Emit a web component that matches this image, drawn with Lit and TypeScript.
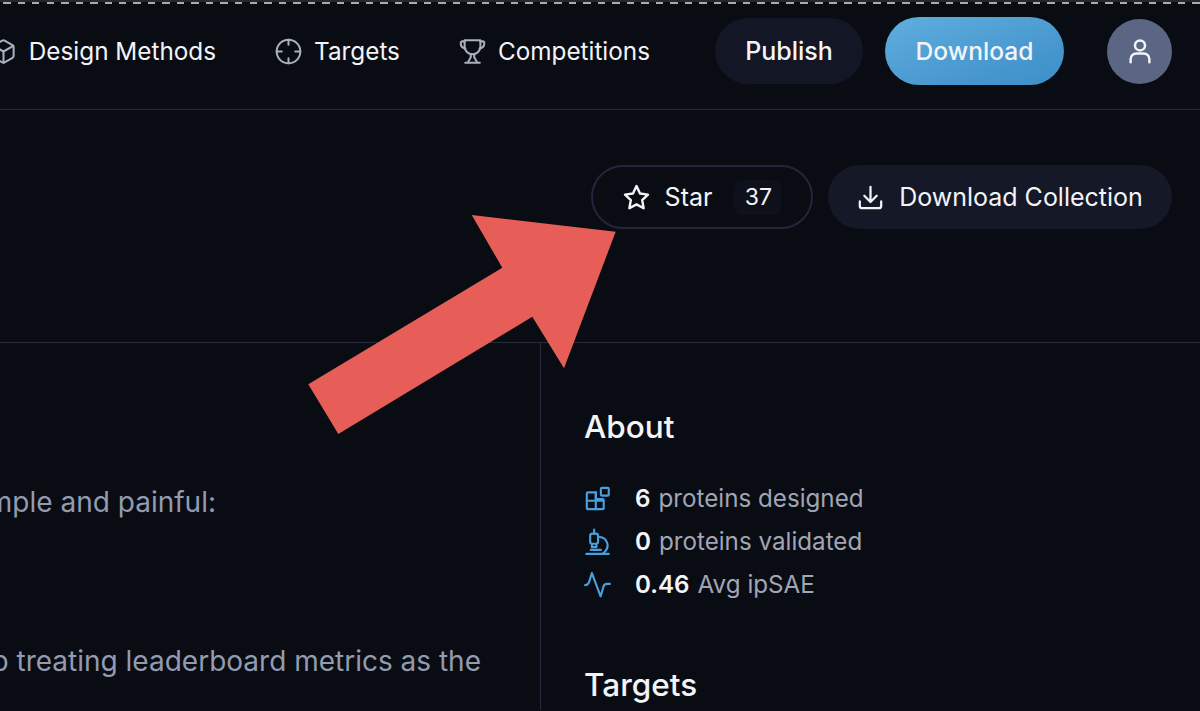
import { LitElement, html, css, svg } from 'lit';
import { customElement } from 'lit/decorators.js';

// stroke icons share one wrapper, size comes from the css
const icon = (body: unknown) => html`
  <svg viewBox="0 0 24 24" fill="none" stroke="currentColor" stroke-width="2"
    stroke-linecap="round" stroke-linejoin="round">${body}</svg>`;

const cube = svg`<path d="M21 8a2 2 0 0 0-1-1.700l-7-4a2 2 0 0 0-2 0l-7 4A2 2 0 0 0 3 8v8a2 2 0 0 0 1 1.700l7 4a2 2 0 0 0 2 0l7-4a2 2 0 0 0 1-1.700Z"/><path d="m3.300 7 8.700 5 8.700-5"/><path d="M12 22V12"/>`;
const crosshair = svg`<circle cx="12" cy="12" r="10.500"/><path d="M12 1.500V6M12 18v4.500M1.500 12H6M18 12h4.500"/>`;
const trophy = svg`<path d="M5 2h14v5.500a7 7 0 0 1-14 0Z"/><path d="M5 3H3a1.500 1.500 0 0 0-1.500 1.500c0 2.500 1.500 4.500 4.200 5"/><path d="M19 3h2a1.500 1.500 0 0 1 1.500 1.500c0 2.500-1.500 4.500-4.200 5"/><path d="M10.500 14.500V17L8 21.500M13.500 14.500V17l2.500 4.500"/><path d="M5.500 22h13"/>`;
const user = svg`<circle cx="12" cy="7.500" r="4"/><path d="M4.500 21v-2.500a4.500 4.500 0 0 1 4.500-4.500h6a4.500 4.500 0 0 1 4.500 4.500V21"/>`;
const star = svg`<path d="M12 2.500l2.900 6.200 6.600.9-4.800 4.600 1.200 6.700L12 17.700l-5.900 3.200 1.200-6.700-4.800-4.600 6.600-.9Z"/>`;
const download = svg`<path d="M12 2.500v13M6.500 10.500 12 16l5.500-5.500"/><path d="M2.500 15.500v4a2 2 0 0 0 2 2h15a2 2 0 0 0 2-2v-4"/>`;
const blocks = svg`<path d="M10.500 6.500h-7a1 1 0 0 0-1 1v13a1 1 0 0 0 1 1h13a1 1 0 0 0 1-1v-7a1 1 0 0 0-1-1h-6Z"/><path d="M10.500 6.500v15M2.500 14h15"/><rect x="15" y="2.500" width="7" height="7" rx="1"/>`;
const microscope = svg`<path d="M2 23h20"/><path d="M6 19.500h9"/><path d="M14 8a7.500 7.500 0 0 1 5 12.500c-.6.800-1.500 1.800-2.500 2.500"/><rect x="5.500" y="5" width="7" height="9" rx="2"/><path d="M9 1.500V5M7 14v3h4v-3"/>`;
const pulse = svg`<path d="M1 12.500c2 0 3-1 3.800-3.500L7 1.800 14.800 22.500 17.300 14c.5-1.800 1.500-2.500 3-2.500H23"/>`;

@customElement('app-root')
export class AppRoot extends LitElement {
  static styles = css`
    :host {
      display: block;
      position: relative;
      width: 1200px;
      height: 711px;
      overflow: hidden;
      background: #0a0c13;
      color: #f2f4f8;
      font-family: 'Inter', 'Liberation Sans', sans-serif;
      font-size: 25px;
    }

    .strip {
      height: 2px;
      background: #26272b;
    }
    .dashes {
      height: 2px;
      background: repeating-linear-gradient(90deg, transparent 0 3px, #a8aaae 3px 10.500px, transparent 10.500px 14.500px);
    }

    header {
      display: flex;
      align-items: center;
      justify-content: flex-end;
      box-sizing: border-box;
      height: 106px;
      padding: 0 28px 11px 0;
      border-bottom: 1px solid #262a3c;
      white-space: nowrap;
    }
    nav {
      display: flex;
      align-items: center;
      gap: 59px;
      margin-right: 65px;
      font-size: 24.300px;
    }
    .nav-item {
      display: flex;
      align-items: center;
      gap: 12px;
    }
    .nav-item svg {
      width: 27px;
      height: 27px;
      color: #aab0bf;
      stroke-width: 1.800;
    }
    .actions {
      display: flex;
      align-items: center;
    }
    .pill {
      display: flex;
      align-items: center;
      justify-content: center;
      height: 66px;
      box-sizing: border-box;
      border-radius: 33px;
    }
    .publish {
      width: 148px;
      background: #131624;
      font-weight: 450;
    }
    .get {
      width: 179px;
      height: 68px;
      border-radius: 34px;
      margin-left: 22px;
      background: linear-gradient(160deg, #5eaede, #3d8dc8);
      font-size: 24.600px;
      font-weight: 450;
    }
    .avatar {
      display: flex;
      align-items: center;
      justify-content: center;
      width: 65px;
      height: 65px;
      margin-left: 43px;
      border-radius: 50%;
      background: #5a6683;
    }
    .avatar svg {
      width: 30px;
      height: 30px;
    }

    .hero {
      display: flex;
      justify-content: flex-end;
      gap: 15px;
      height: 233px;
      padding: 55px 28px 0 0;
      box-sizing: border-box;
      border-bottom: 1px solid #262a3c;
    }
    .hero .pill {
      height: 64px;
      border-radius: 32px;
      white-space: nowrap;
    }
    .star {
      width: 222px;
      border: 2px solid #23263a;
    }
    .star svg {
      width: 29px;
      height: 29px;
    }
    .star .label {
      margin-left: 14px;
    }
    .count {
      display: flex;
      align-items: center;
      justify-content: center;
      width: 48px;
      height: 35px;
      margin-left: 22px;
      border-radius: 8px;
      background: #0f111a;
      font-size: 23px;
    }
    .collection {
      width: 344px;
      background: #151827;
    }
    .collection svg {
      width: 27px;
      height: 27px;
      margin-right: 15px;
    }

    main {
      display: grid;
      grid-template-columns: 541px 1fr;
      height: 367px;
    }
    /* the reference is cropped, lines run out past the left edge */
    .story {
      display: flex;
      flex-direction: column;
      align-items: flex-end;
      overflow: hidden;
      border-right: 1px solid #262a3c;
      box-sizing: border-box;
      color: #939bb0;
      font-size: 28px;
      white-space: nowrap;
    }
    .story p {
      flex: none;
      margin: 0;
      line-height: 40px;
    }
    .story .first {
      margin: 139px 324px 0 0;
    }
    .story .second {
      margin: 119px 59px 0 0;
    }
    aside {
      padding: 64px 0 0 43px;
    }
    h2 {
      margin: 0;
      font-size: 31.500px;
      line-height: 40px;
      font-weight: 500;
    }
    .stats {
      display: flex;
      flex-direction: column;
      gap: 9px;
      margin: 34px 0 64px;
      font-size: 24.200px;
    }
    .stat {
      display: flex;
      align-items: center;
      height: 34px;
      color: #a0a6b5;
    }
    .stat svg {
      width: 27px;
      height: 27px;
      margin-right: 24px;
      color: #4b9fdc;
      stroke-width: 1.900;
    }
    .stat b {
      margin-right: 8px;
      color: #f5f6f9;
      font-weight: 600;
    }

    .arrow {
      position: absolute;
      left: 0;
      top: 0;
      width: 1200px;
      height: 711px;
      pointer-events: none;
    }
  `;

  render() {
    return html`
      <div class="strip"></div>
      <div class="dashes"></div>
      <header>
        <nav>
          <div class="nav-item">${icon(cube)}Design Methods</div>
          <div class="nav-item">${icon(crosshair)}Targets</div>
          <div class="nav-item">${icon(trophy)}Competitions</div>
        </nav>
        <div class="actions">
          <div class="pill publish">Publish</div>
          <div class="pill get">Download</div>
          <div class="avatar">${icon(user)}</div>
        </div>
      </header>
      <section class="hero">
        <div class="pill star">
          ${icon(star)}<span class="label">Star</span><span class="count">37</span>
        </div>
        <div class="pill collection">${icon(download)}Download Collection</div>
      </section>
      <main>
        <div class="story">
          <p class="first">The problem is simple and painful:</p>
          <p class="second">We need to stop treating leaderboard metrics as the</p>
        </div>
        <aside>
          <h2>About</h2>
          <div class="stats">
            <div class="stat">${icon(blocks)}<b>6</b>proteins designed</div>
            <div class="stat">${icon(microscope)}<b>0</b>proteins validated</div>
            <div class="stat">${icon(pulse)}<b>0.46</b>Avg ipSAE</div>
          </div>
          <h2>Targets</h2>
        </aside>
      </main>
      <svg class="arrow" viewBox="0 0 1200 711">
        <polygon fill="#e65e57"
          points="615.700,231.700 471.700,215 502.300,267.700 308.300,384.300 338.300,434 532.300,316.700 564,368.300"></polygon>
      </svg>
    `;
  }
}
